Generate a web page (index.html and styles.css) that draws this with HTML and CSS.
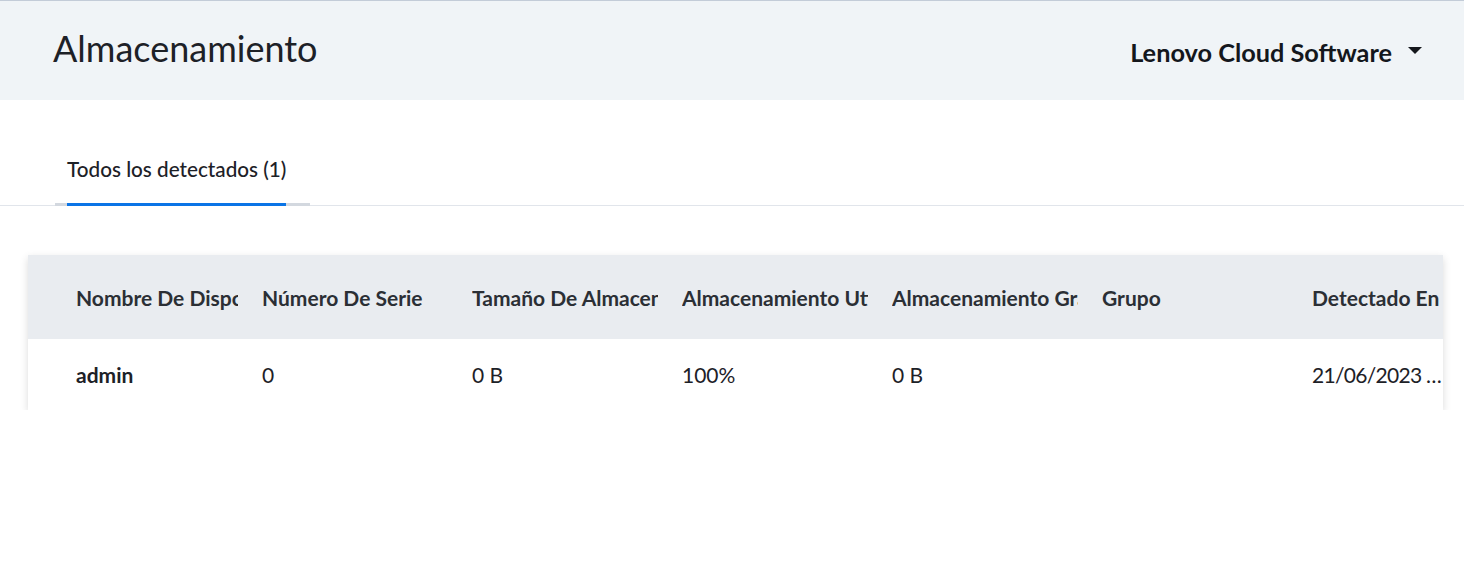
FILE: index.html
```html
<!DOCTYPE html>
<html lang="es">
<head>
  <meta charset="UTF-8">
  <meta name="viewport" content="width=device-width, initial-scale=1.0">
  <title>Almacenamiento</title>
<link rel="stylesheet" href="styles.css">
</head>
<body>
  <header class="page-header">
    <h1>Almacenamiento</h1>
    <div class="org-menu">
      <span>Lenovo Cloud Software</span>
      <span class="caret"></span>
    </div>
  </header>

  <nav class="tabs">
    <div class="tab-track">
      <a class="tab active" href="#">Todos los detectados (1)</a>
    </div>
  </nav>

  <main class="content">
    <div class="table-card">
      <div class="table-row table-head">
        <div class="cell">Nombre De Dispositivo</div>
        <div class="cell">Número De Serie</div>
        <div class="cell">Tamaño De Almacenamiento</div>
        <div class="cell">Almacenamiento Utilizado</div>
        <div class="cell">Almacenamiento Gratuito</div>
        <div class="cell">Grupo</div>
        <div class="cell">Detectado En</div>
      </div>
      <div class="table-row">
        <div class="cell name">admin</div>
        <div class="cell">0</div>
        <div class="cell">0 B</div>
        <div class="cell">100%</div>
        <div class="cell">0 B</div>
        <div class="cell"></div>
        <div class="cell ellipsis">21/06/2023 10:24:31</div>
      </div>
    </div>
  </main>
</body>
</html>
```

FILE: styles.css
```css
body {
  margin: 0;
  font-family: Lato, "Noto Sans", sans-serif;
  color: #1d2127;
  background: #ffffff;
}

.page-header {
  display: flex;
  justify-content: space-between;
  align-items: center;
  height: 99px;
  padding: 0 42px 0 53px;
  background: #f0f4f7;
  border-top: 1px solid #c3ccd8;
}

.page-header h1 {
  margin: 0 0 6px;
  font-size: 36px;
  font-weight: 400;
  color: #1d2127;
}

.org-menu {
  display: flex;
  align-items: center;
  gap: 16px;
  margin-top: 3px;
  font-size: 25.3px;
  font-weight: 700;
  color: #14171c;
}

.caret {
  width: 0;
  height: 0;
  border-left: 7px solid transparent;
  border-right: 7px solid transparent;
  border-top: 7px solid #14171c;
  margin-bottom: 4px;
}

.tabs {
  padding: 0 0 0 55px;
  border-bottom: 1px solid #e1e5eb;
  margin-top: 57px;
}

.tab-track {
  display: inline-block;
  padding: 0 24px 0 12px;
  border-bottom: 3px solid #d3d8df;
  margin-bottom: -1px;
}

.tab {
  display: inline-block;
  padding-bottom: 22px;
  margin-bottom: -3px;
  font-size: 20.7px;
  font-weight: 500;
  color: #1d2127;
  text-decoration: none;
  border-bottom: 3px solid #0a74e6;
}

.content {
  padding: 49px 21px 0 28px;
}

.table-card {
  background: #ffffff;
  box-shadow: 0 3px 8px rgba(0, 0, 0, 0.15);
  overflow: hidden;
}

.table-row {
  display: grid;
  grid-template-columns: 234px repeat(5, 210px) 1fr;
  align-items: center;
  height: 71px;
  font-size: 21px;
}

.table-head {
  height: 84px;
  background: #e9ecf0;
  font-weight: 700;
  color: #2b2f35;
}

.cell {
  margin-right: 24px;
  white-space: nowrap;
  overflow: hidden;
}

.cell:first-child {
  margin-left: 48px;
}

.cell:last-child {
  margin-right: 0;
}

.cell.name {
  font-weight: 700;
}

.cell.ellipsis {
  letter-spacing: -0.7px;
  text-overflow: ellipsis;
}
```
